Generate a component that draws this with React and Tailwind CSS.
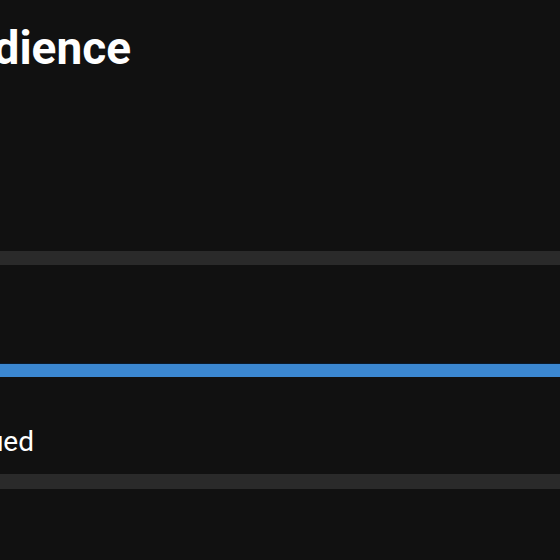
export default function App() {
  return (
    <div className="w-[560px] h-[560px] overflow-hidden bg-[#111111] flex flex-col" style={{ fontFamily: "Roboto, 'Noto Sans', sans-serif" }}>
      <div className="mt-[25px] h-[46px] w-[131px] flex justify-end items-center">
        <span className="whitespace-nowrap text-[46px] leading-[46px] font-bold text-white">Audience</span>
      </div>
      <div className="mt-[180px] h-[14px] w-full bg-[#2a2a2a]" />
      <div className="mt-[98px] h-[14px] w-full bg-[#3b87d1] border-t border-[#0b1a2b]" />
      <div className="mt-[51px] h-[28px] w-[34px] flex justify-end items-center">
        <span className="whitespace-nowrap text-[28px] leading-[28px] text-white">Continued</span>
      </div>
      <div className="mt-[18px] h-[15px] w-full bg-[#2a2a2a]" />
    </div>
  );
}
